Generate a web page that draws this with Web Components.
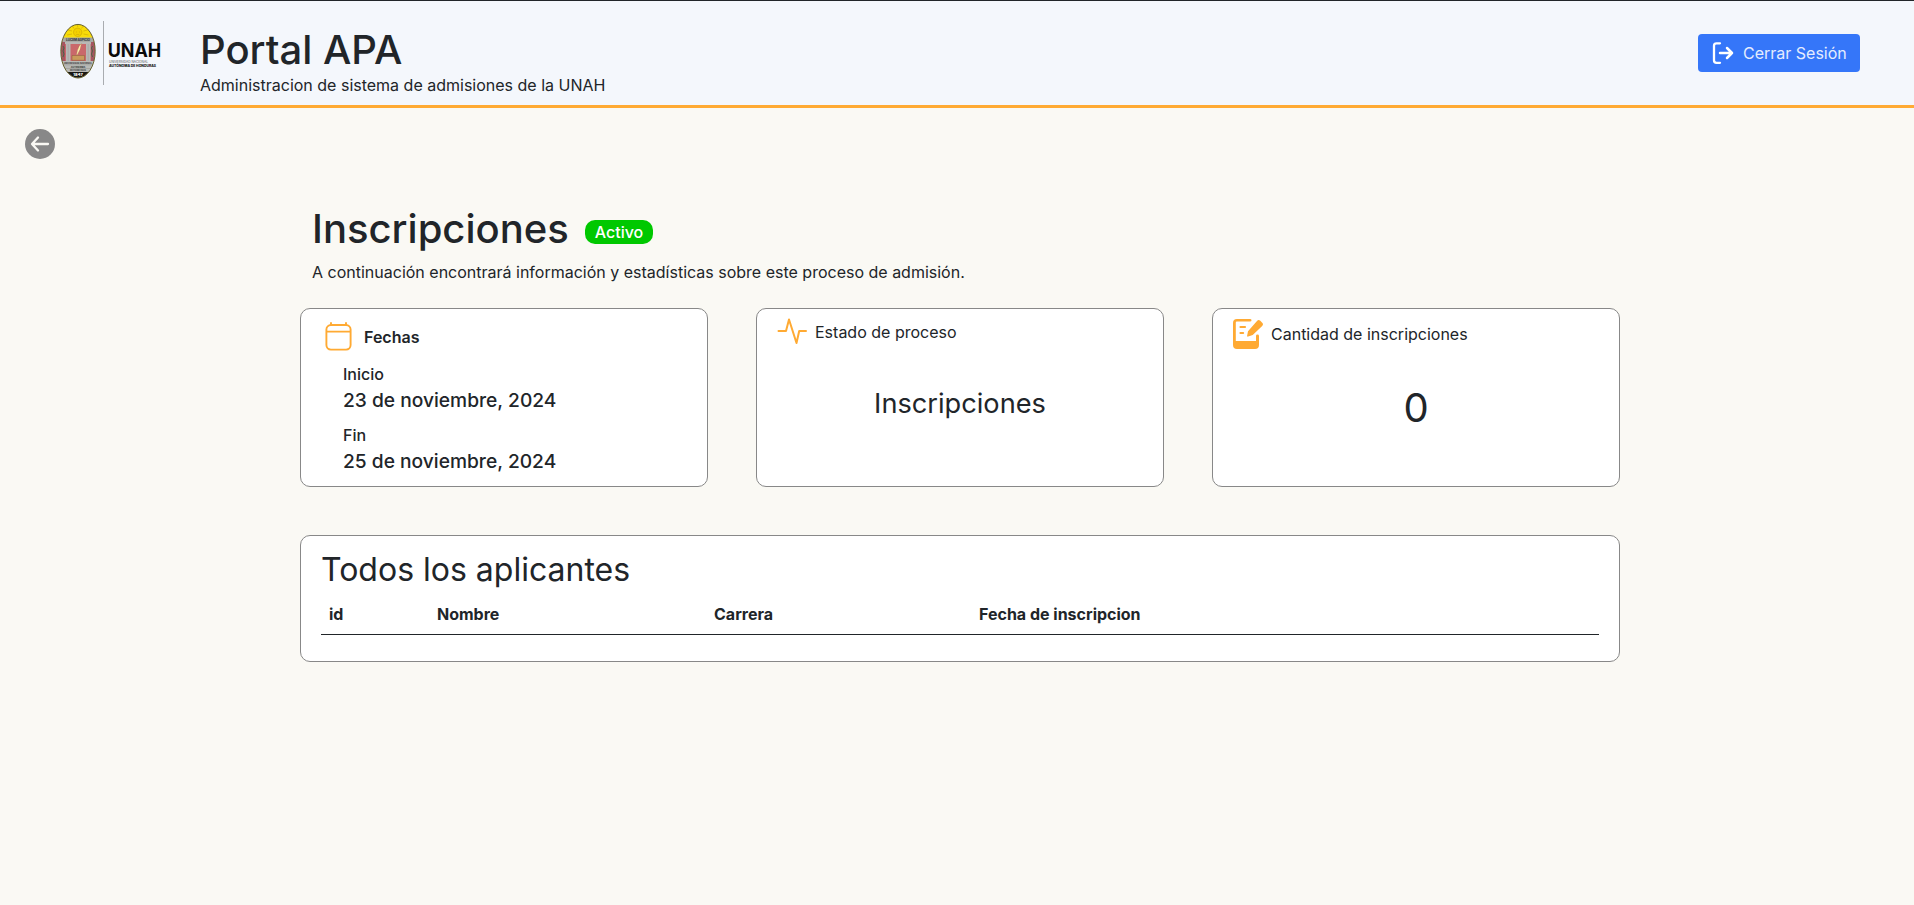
<!DOCTYPE html>
<html lang="es">
<head>
<meta charset="utf-8">
<title>Portal APA</title>
<style>
html,body{margin:0;height:100%}
body{background:#faf9f4;color:#212529;font:400 16px/24px Inter,sans-serif}
</style>
</head>
<body>
<apa-page>
  <apa-header slot="header" heading="Portal APA" sub="Administracion de sistema de admisiones de la UNAH">
    <unah-logo slot="logo"></unah-logo>
    <logout-button slot="action">Cerrar Sesión</logout-button>
  </apa-header>
  <back-button></back-button>
  <process-title badge="Activo">Inscripciones<span slot="sub">A continuación encontrará información y estadísticas sobre este proceso de admisión.</span></process-title>
  <card-row>
    <info-card class="dates"><apa-icon slot="icon" name="calendar"></apa-icon><span slot="label">Fechas</span>
      <date-item label="Inicio">23 de noviembre, 2024</date-item>
      <date-item label="Fin">25 de noviembre, 2024</date-item>
    </info-card>
    <info-card class="state"><apa-icon slot="icon" name="activity"></apa-icon><span slot="label">Estado de proceso</span><big-value class="name">Inscripciones</big-value></info-card>
    <info-card class="count"><apa-icon slot="icon" name="edit"></apa-icon><span slot="label">Cantidad de inscripciones</span><big-value class="number">0</big-value></info-card>
  </card-row>
  <applicants-table>Todos los aplicantes</applicants-table>
</apa-page>
<script>
function define(name, html) {
  customElements.define(name, class extends HTMLElement {
    constructor() {
      super();
      const root = this.attachShadow({ mode: 'open' });
      const t = document.createElement('template');
      t.innerHTML = typeof html === 'function' ? html(this) : html;
      root.append(t.content.cloneNode(true));
    }
  });
}

define('apa-page', `<style>
:host{display:block}
main{display:flex;flex-direction:column}
</style><slot name="header"></slot><main><slot></slot></main>`);

define('apa-header', el => `<style>
:host{display:flex;box-sizing:border-box;height:108px;background:#f4f7fc;border-top:1px solid #212529;border-bottom:3px solid #ffaa33;padding:0 54px 0 60px}
.titles{margin:25px 0 0 20px}
h1{margin:0;font-size:40px;line-height:48px;font-weight:500}
p{margin:-1px 0 0}
.action{margin:33px 0 0 auto}
</style><slot name="logo"></slot><div class="titles"><h1>${el.getAttribute('heading')}</h1><p>${el.getAttribute('sub')}</p></div><div class="action"><slot name="action"></slot></div>`);

define('unah-logo', `<style>
:host{display:block;width:120px;height:64px;margin-top:20px}
svg{display:block;overflow:visible}
text{font-family:Inter,"Liberation Sans",sans-serif}
</style><svg width="120" height="64" viewBox="60 21 120 64">
<defs><clipPath id="seal"><ellipse cx="78" cy="51.2" rx="17" ry="26.6"/></clipPath></defs>
<g clip-path="url(#seal)">
<rect x="60" y="23" width="36" height="56" fill="#c9686b"/>
<rect x="60" y="23" width="36" height="15" fill="#f8dc08"/>
<g stroke="#d2ad08" stroke-width=".7" fill="none"><circle cx="77.7" cy="32.3" r="4.2" fill="#f3d000"/><path d="M77.700 24v3M72 25.500l2 3M83.500 25.500l-2 3M68 30l4 1M87.500 30l-4 1M67 35l5-1M88.500 35l-5-1M76 32h1M79 32h1M76.200 34.500h3"/></g>
<rect x="63" y="37.500" width="30" height="4.500" fill="#a9aaa5"/>
<path d="M60 42h5v22h-5zM91 42h5v22h-5z" fill="#a65560"/>
<path d="M63 46l1 2-1 3 1 3-1 3M92.500 46l-1 2 1 3-1 3 1 3" stroke="#496447" stroke-width="1" fill="none"/>
<path d="M65 42h26v2H65zM66 44h4.500v18H66zM86 44h4.500v18H86z" fill="#b8b8b5"/>
<path d="M68.200 44v17M88.200 44v17" stroke="#999" stroke-width=".5"/>
<path d="M72 55.500h12.500v4.800H72z" fill="#c99a5c" stroke="#8a5a3c" stroke-width=".5"/>
<path d="M76.500 55l1-5q1-4 4-6.500l-1.500 6-2.500 5z" fill="#fff0b0" stroke="#a67b43" stroke-width=".3"/>
<rect x="60" y="61" width="36" height="11" fill="#b9bab7"/>
<path d="M60 64.800h36M60 68.500h36" stroke="#858682" stroke-width=".4"/>
<rect x="60" y="72" width="36" height="8" fill="#171714"/>
</g>
<g text-anchor="middle" font-weight="800" fill="#444">
<text x="78" y="41.400" font-size="3.300" textLength="24">LUCEM ASPICIO</text>
<text x="78" y="64.300" font-size="2.400" textLength="28" lengthAdjust="spacingAndGlyphs">UNIVERSIDAD NACIONAL</text>
<text x="78" y="68" font-size="2.400">AUTONOMA</text>
<text x="78" y="71.400" font-size="2.200">DE HONDURAS</text>
<text x="78" y="76.100" font-size="4" fill="#fff">1847</text></g>
<ellipse cx="78" cy="51.200" rx="17.200" ry="26.800" fill="none" stroke="#66652f" stroke-width="1"/>
<path d="M103.500 21v64" stroke="#a9acb0"/>
<text x="107.700" y="56.700" font-size="18.300" font-weight="700" fill="#090909" textLength="53.500" lengthAdjust="spacingAndGlyphs">UNAH</text>
<text x="109" y="63.100" font-size="3.200" fill="#555" textLength="39" lengthAdjust="spacingAndGlyphs">UNIVERSIDAD NACIONAL</text>
<text x="109" y="66.700" font-size="3.200" font-weight="800" fill="#111" textLength="47" lengthAdjust="spacingAndGlyphs">AUTÓNOMA DE HONDURAS</text>
</svg>`);

define('logout-button', `<style>
:host{display:block}
button{display:flex;align-items:center;box-sizing:border-box;width:162px;height:38px;padding:0 0 0 14px;border:0;border-radius:4px;background:#3576f9;color:#e4ecfe;font:inherit;font-weight:400;white-space:nowrap}
svg{margin-right:9px}
</style><button><svg width="22" height="22" viewBox="0 0 22 22" fill="none" stroke="#fff" stroke-width="2.300" stroke-linecap="round" stroke-linejoin="round"><path d="M8 1.300H4.500Q2 1.300 2 3.700v14.800q0 2.300 2.500 2.300H8"/><path d="M8 11h12M15 6l5 5-5 5" stroke-width="2.500"/></svg><slot></slot></button>`);

define('back-button', `<style>
:host{display:block;width:30px;height:30px;margin:21px 0 0 25px}
svg{display:block}
</style><svg width="30" height="30" viewBox="0 0 30 30" fill="none"><circle cx="15" cy="15" r="15" fill="#888"/><path d="M23 15H7.500M13 8.500L7 15l6 6.500" stroke="#faf9f4" stroke-width="2.300" stroke-linecap="round" stroke-linejoin="round"/></svg>`);

define('process-title', el => `<style>
:host{display:block;margin:46px 0 0 312px}
.line{display:flex;align-items:flex-start}
h1{margin:0;font-size:40px;line-height:48px;font-weight:500}
.badge{margin:15px 0 0 16px;padding:0 10px;border-radius:10px;background:#00c800;color:#fff;font-weight:500}
p{margin:7px 0 0}
</style><div class="line"><h1><slot></slot></h1><span class="badge">${el.getAttribute('badge')}</span></div><p><slot name="sub"></slot></p>`);

define('card-row', `<style>
:host{display:grid;grid-template-columns:repeat(3,408px);gap:48px;margin:24px 0 0 300px}
</style><slot></slot>`);

define('info-card', `<style>
:host{display:block;box-sizing:border-box;height:179px;background:#fff;border:1px solid #888;border-radius:10px;overflow:hidden}
.head{display:flex;align-items:center}
:host(.dates) .head{padding:12px 0 0 22px;height:32px;gap:9px;font-weight:600}
:host(.state) .head{padding:8px 0 0 20px;height:30px;gap:8px}
:host(.count) .head{padding:10px 0 0 20px;height:30px;gap:8px}
</style><div class="head"><slot name="icon"></slot><slot name="label"></slot></div><slot></slot>`);

define('date-item', el => `<style>
:host{display:block;margin:9px 0 0 42px;font-weight:500;height:52px}
.value{font-size:19.200px;line-height:28px}
</style><div>${el.getAttribute('label')}</div><div class="value"><slot></slot></div>`);

define('big-value', `<style>
:host{display:block;text-align:center}
:host(.name){font-size:27.200px;line-height:42px;margin-top:36px}
:host(.number){font-size:40px;line-height:60px;margin-top:29px}
</style><slot></slot>`);

const icons = {
  calendar: `<svg width="32" height="32" viewBox="0 0 32 32"><g fill="none" stroke="#ffaa33" stroke-width="1.900"><rect x="3.400" y="4" width="24.200" height="24.600" rx="4.500"/><path d="M3 10.600h25"/><path d="M8 2v2M23 2v2" stroke-linecap="round"/></g></svg>`,
  activity: `<svg width="30" height="30" viewBox="0 0 30 30"><path d="M1.500 14H9L12 2.500 19.500 26 22.200 14H29" fill="none" stroke="#ffaa33" stroke-width="2" stroke-linecap="round" stroke-linejoin="round"/></svg>`,
  edit: `<svg width="30" height="30" viewBox="0 0 30 30"><path d="M4 0h13q1.500 0 1.500 1.300T17 2.600H3.800q-1 0-1 1V22H23V17q0-1.400 1.500-1.400T26 17v9q0 4-4 4H4q-4 0-4-4V4q0-4 4-4z" fill="#ffaa33"/><path d="M14 17.200l1-5L24 2q1.500-1.700 3.300-.2l1.900 1.900q1.600 1.600 0 3.300l-9.500 9-4.500 1.400q-1.400.3-1.200-.2z" fill="#ffaa33"/><path d="M7.500 8H12M7.500 14h2.600" fill="none" stroke="#ffaa33" stroke-width="2.200" stroke-linecap="round"/></svg>`
};
define('apa-icon', el => `<style>:host{display:block}svg{display:block}</style>${icons[el.getAttribute('name')]}`);

define('applicants-table', `<style>
:host{display:block;box-sizing:border-box;width:1320px;height:127px;margin:48px 0 0 300px;padding:10px 20px;background:#fff;border:1px solid #888;border-radius:10px}
h2{margin:0;font-size:32px;line-height:48px;font-weight:400}
table{width:1278px;border-spacing:0;table-layout:fixed}
th{padding:8px;text-align:left;font-weight:700;border-bottom:1px solid #212529}
</style><h2><slot></slot></h2><table><colgroup><col style="width:108px"><col style="width:277px"><col style="width:265px"><col></colgroup><thead><tr><th>id</th><th>Nombre</th><th>Carrera</th><th>Fecha de inscripcion</th></tr></thead></table>`);
</script>
</body>
</html>
